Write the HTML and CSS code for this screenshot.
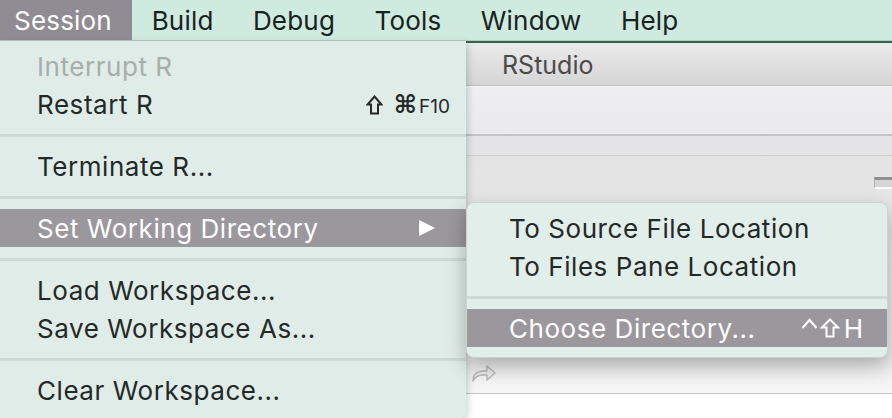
FILE: index.html
```html
<!DOCTYPE html>
<html>
<head>
<meta charset="utf-8">
<link rel="stylesheet" href="styles.css">
</head>
<body>
<div class="menubar">
  <span class="mb-item active">Session</span>
  <span class="mb-item">Build</span>
  <span class="mb-item">Debug</span>
  <span class="mb-item">Tools</span>
  <span class="mb-item">Window</span>
  <span class="mb-item">Help</span>
</div>
<div class="desktop">
  <div class="window">
    <div class="win-accent"></div>
    <div class="titlebar"><span class="title">RStudio</span></div>
    <div class="toolbar"></div>
    <div class="band"></div>
    <div class="pane">
      <div class="pane-head"><span class="pane-btn"></span></div>
      <div class="pane-tools">
        <svg class="redo" width="26" height="20" viewBox="0 0 26 20">
          <path d="M2 18 C2 11 6 8 13 8 L16 8 L16 3 L24 10 L16 17 L16 12 L12 12 C7 12 4 14 2 18 Z" fill="#ececec" stroke="#b8b8b8" stroke-width="1.4" stroke-linejoin="round"/>
        </svg>
      </div>
    </div>
    <div class="editor"></div>
  </div>

  <div class="menu main-menu">
    <div class="row disabled"><span>Interrupt R</span></div>
    <div class="row"><span>Restart R</span>
      <span class="sc">
        <svg class="shift" width="17" height="20" viewBox="0 0 17 20"><path d="M8.5 1.5 L15.5 9.5 L12 9.5 L12 18.5 L5 18.5 L5 9.5 L1.5 9.5 Z" fill="none" stroke="currentColor" stroke-width="2" stroke-linejoin="miter"/></svg>
        <span class="cmd">⌘</span><span class="fkey">F10</span>
      </span>
    </div>
    <div class="sep"></div>
    <div class="row"><span>Terminate R...</span></div>
    <div class="sep"></div>
    <div class="row hl"><span>Set Working Directory</span>
      <svg class="arrow" width="18" height="18" viewBox="0 0 18 18"><polygon points="1,1 17,9 1,17" fill="#fff"/></svg>
    </div>
    <div class="sep"></div>
    <div class="row"><span>Load Workspace...</span></div>
    <div class="row"><span>Save Workspace As...</span></div>
    <div class="sep"></div>
    <div class="row"><span>Clear Workspace...</span></div>
  </div>

  <div class="menu sub-menu">
    <div class="row"><span>To Source File Location</span></div>
    <div class="row"><span>To Files Pane Location</span></div>
    <div class="sep"></div>
    <div class="row hl"><span>Choose Directory...</span>
      <span class="sc sc2">
        <svg class="ctrl" width="17" height="20" viewBox="0 0 17 20"><polyline points="1.5,10 8.5,2 15.5,10" fill="none" stroke="currentColor" stroke-width="2.2"/></svg>
        <svg class="shift" width="20" height="20" viewBox="0 0 20 20"><path d="M10 1.5 L18 9.5 L13.5 9.5 L13.5 18.5 L6.5 18.5 L6.5 9.5 L2 9.5 Z" fill="none" stroke="currentColor" stroke-width="2" stroke-linejoin="miter"/></svg>
        <span class="hkey">H</span>
      </span>
    </div>
  </div>
</div>
</body>
</html>
```
FILE: styles.css
```css
* { box-sizing: border-box; }
html, body { margin: 0; padding: 0; }
body {
  width: 892px;
  height: 418px;
  overflow: hidden;
  font-family: Inter, "Liberation Sans", sans-serif;
  background: #fff;
}
.menubar {
  display: flex;
  height: 41px;
  background: #cfeadf;
  border-bottom: 1px solid #b7c6c0;
  font-size: 26px;
  color: #18221e;
}
.mb-item {
  display: flex;
  align-items: center;
  padding: 0 19.7px;
  letter-spacing: 0.2px;
}
.mb-item.active {
  background: #8f8c93;
  color: #fff;
  padding-left: 14px;
  padding-right: 20px;
}
.desktop {
  position: relative;
  height: 377px;
}
.window {
  display: flex;
  flex-direction: column;
  height: 100%;
}
.win-accent { height: 2px; background: #2c6a4f; }
.titlebar {
  height: 43px;
  background: linear-gradient(#eaeaea, #d6d6d6);
  border-bottom: 1px solid #bcbcbc;
  display: flex;
  align-items: center;
  padding-left: 502px;
  padding-top: 2px;
}
.title { font-size: 25px; color: #4a4a4a; }
.toolbar {
  height: 50px;
  background: linear-gradient(#efeff1, #eaeaec);
  border-top: 1px solid #fafafa;
  border-bottom: 2px solid #c4c4c4;
}
.band {
  height: 20px;
  background: #e5e5e7;
  border-bottom: 1px solid #cfcfcf;
}
.pane {
  height: 238px;
  display: flex;
  flex-direction: column;
  justify-content: space-between;
  background: linear-gradient(#e4e4e4, #eeeeee);
  border-bottom: 1px solid #c6c6c6;
}
.pane-head {
  display: flex;
  justify-content: flex-end;
  padding-top: 21px;
}
.pane-btn {
  width: 18px;
  height: 12px;
  background: #d6d6d6;
  border-top: 3px solid #8e8e8e;
  border-bottom: 2px solid #fafafa;
  border-left: 1px solid #b0b0b0;
}
.pane-tools {
  height: 40px;
  background: linear-gradient(#ebebeb, #f7f7f7);
  padding: 10px 0 0 471px;
}
.editor { flex: 1; background: #fff; }

.menu {
  position: absolute;
  background: #e0ece8;
  color: #232927;
  font-size: 26px;
  letter-spacing: 0.55px;
}
.main-menu {
  left: 0;
  top: 0;
  width: 466px;
  height: 377px;
  padding-top: 6px;
  border-bottom-right-radius: 6px;
  box-shadow: 1px 3px 8px rgba(0,0,0,0.22);
}
.sub-menu {
  left: 466px;
  top: 161px;
  width: 422px;
  padding: 6px 0 10px;
  border-radius: 8px;
  border: 1px solid #c9d3d0;
  box-shadow: 0 8px 20px rgba(0,0,0,0.28);
  background: #e1eeea;
}
.row {
  height: 38px;
  display: flex;
  align-items: center;
  justify-content: space-between;
  padding: 0 16px 0 37px;
}
.sub-menu .row { padding: 0 24px 0 42px; }
.row.disabled { color: #a6aeab; }
.row.hl { background: #9a979d; color: #fff; }
.main-menu .row.hl { padding-right: 30px; }
.sep {
  height: 24px;
  display: flex;
  align-items: center;
}
.sep::before {
  content: "";
  display: block;
  width: 100%;
  height: 3px;
  background: #cdd9d5;
}
.sc { display: flex; align-items: flex-end; letter-spacing: 0; }
.sc svg { display: block; }
.shift { margin-bottom: 2px; }
.cmd {
  font-family: "DejaVu Sans", sans-serif;
  font-size: 25px;
  line-height: 1;
  margin-left: 11px;
  font-weight: bold;
}
.fkey { font-size: 19px; line-height: 1; margin-left: 2px; margin-bottom: 1px; }
.sc2 { align-items: center; }
.sc2 .shift { margin: 0; }
.ctrl { margin: 0 2px 0 0; }
.hkey { line-height: 20px; height: 20px; margin-left: 4px; padding-top: 1px; }
.arrow { display: block; }
.redo { display: block; }
```
